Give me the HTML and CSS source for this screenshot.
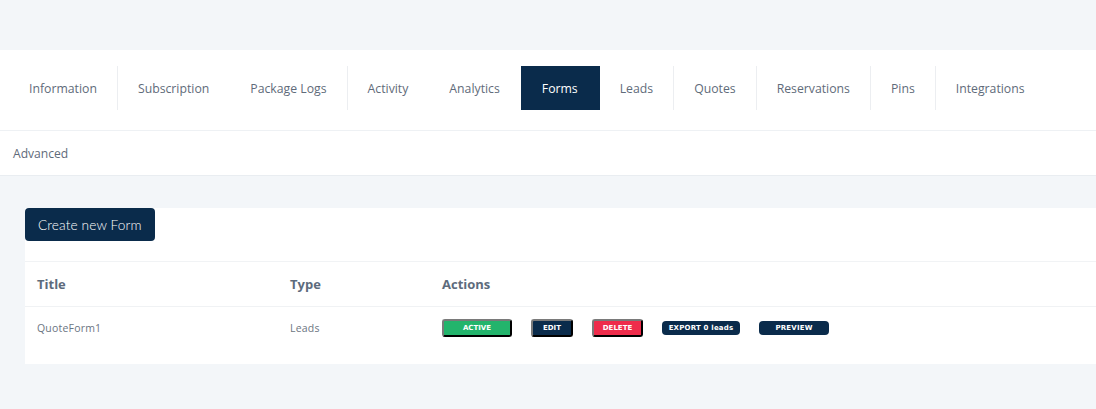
FILE: index.html
```html
<!DOCTYPE html>
<html lang="en">

<head>
    <meta charset="UTF-8">
    <meta name="viewport" content="width=device-width, initial-scale=1.0">
    <title>Forms</title>
    <link rel="stylesheet" href="styles.css">
</head>

<body>
    <div class="top-space"></div>

    <div class="nav-card">
        <ul class="tabs">
            <li class="tab sep-right">Information</li>
            <li class="tab">Subscription</li>
            <li class="tab sep-right">Package Logs</li>
            <li class="tab">Activity</li>
            <li class="tab">Analytics</li>
            <li class="tab active">Forms</li>
            <li class="tab sep-right">Leads</li>
            <li class="tab sep-right">Quotes</li>
            <li class="tab sep-right">Reservations</li>
            <li class="tab sep-right">Pins</li>
            <li class="tab">Integrations</li>
        </ul>
        <div class="sub-tabs">
            <span class="sub-tab">Advanced</span>
        </div>
    </div>

    <div class="forms-card">
        <button class="btn-create">Create new Form</button>

        <table class="forms-table">
            <thead>
                <tr>
                    <th class="col-title">Title</th>
                    <th class="col-type">Type</th>
                    <th>Actions</th>
                </tr>
            </thead>
            <tbody>
                <tr>
                    <td>QuoteForm1</td>
                    <td>Leads</td>
                    <td>
                        <div class="actions">
                            <button class="act act-active">ACTIVE</button>
                            <button class="act act-edit">EDIT</button>
                            <button class="act act-delete">DELETE</button>
                            <a class="pill">EXPORT 0 leads</a>
                            <a class="pill">PREVIEW</a>
                        </div>
                    </td>
                </tr>
            </tbody>
        </table>
    </div>
</body>

</html>
```

FILE: styles.css
```css
body,
html {
    margin: 0;
    padding: 0;
}

body {
    background: #f3f6f9;
    font-family: "Open Sans", sans-serif;
    color: #5d6b7c;
    overflow: hidden;
}

.top-space {
    height: 50px;
}

.nav-card {
    background: #fff;
    border-bottom: 1px solid #e9edf1;
}

.tabs {
    display: flex;
    list-style: none;
    margin: 0;
    padding: 16px 0 20px 9px;
    border-bottom: 1px solid #eef1f4;
}

.tab {
    height: 44px;
    line-height: 46px;
    padding: 0 20px;
    font-size: 12.25px;
    color: #5f6b7a;
    border-right: 1px solid transparent;
}

.sep-right {
    border-right-color: #eceef1;
}

.tab.active {
    background: #0a2b4b;
    color: #fff;
    padding: 0 21px;
}

.sub-tabs {
    height: 44px;
    line-height: 46px;
    padding-left: 13px;
    font-size: 12.1px;
    color: #5f6b7a;
}

.forms-card {
    background: #fff;
    margin: 32px 0 0 25px;
    height: 156px;
}

.btn-create {
    display: block;
    height: 33px;
    padding: 0 13px;
    border: none;
    border-radius: 4px;
    background: #0a2b4b;
    color: #fff;
    font-family: "Lato", sans-serif;
    font-weight: 300;
    font-size: 13.7px;
    letter-spacing: .1px;
}

.forms-table {
    margin-top: 20px;
    width: 100%;
    border-collapse: collapse;
    border-top: 1px solid #f1f3f5;
}

.forms-table th {
    height: 44px;
    padding: 0 12px;
    text-align: left;
    font-size: 13px;
    font-weight: 700;
    color: #5d6b7c;
    border-bottom: 1px solid #f0f2f4;
}

.col-title {
    width: 229px;
}

.col-type {
    width: 128px;
}

.forms-table td {
    height: 42px;
    padding: 0 12px;
    font-size: 10.5px;
    color: #6b7582;
    letter-spacing: .2px;
}

.actions {
    display: flex;
    align-items: center;
    gap: 19px;
}

.act {
    height: 18px;
    padding: 0;
    border: 2px outset #767676;
    border-color: #7a7a7a #2f2f2f #2f2f2f #7a7a7a;
    border-radius: 3px;
    color: #fff;
    font-family: "DejaVu Sans", sans-serif;
    font-weight: 700;
    font-size: 7px;
}

.act-active {
    width: 70px;
    background: #23b46c;
}

.act-edit {
    width: 42px;
    background: #0a2b4b;
}

.act-delete {
    width: 51px;
    background: #ee2c4b;
}

.pill {
    display: block;
    height: 14px;
    line-height: 14px;
    border-radius: 4px;
    background: #0a2b4b;
    color: #fff;
    font-family: "DejaVu Sans", sans-serif;
    font-weight: 700;
    font-size: 7px;
    text-align: center;
    width: 78px;
}

.pill + .pill {
    width: 70px;
}
```
